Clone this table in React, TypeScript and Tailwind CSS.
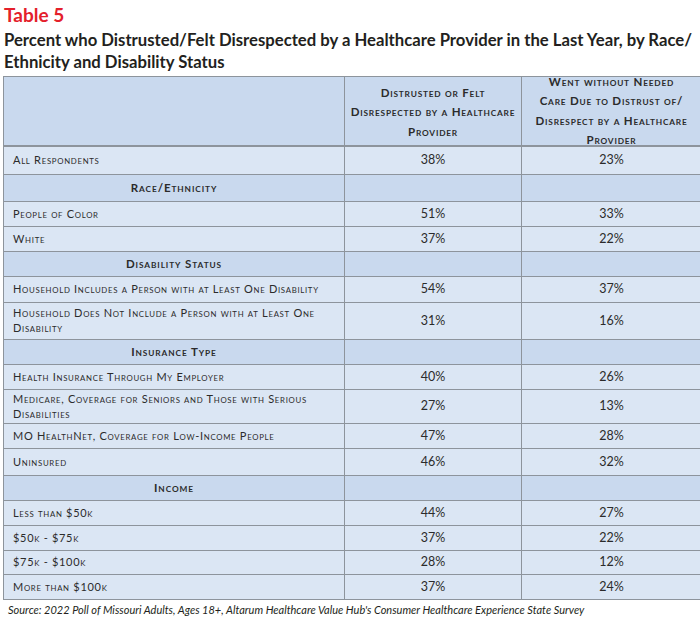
import React from "react";

type Row =
  | { kind: "data"; label: string; a: string; b: string; h: number }
  | { kind: "section"; label: string; h: number };

const rows: Row[] = [
  { kind: "data", label: "All Respondents", a: "38%", b: "23%", h: 28 },
  { kind: "section", label: "Race/Ethnicity", h: 27 },
  { kind: "data", label: "People of Color", a: "51%", b: "33%", h: 25 },
  { kind: "data", label: "White", a: "37%", b: "22%", h: 25 },
  { kind: "section", label: "Disability Status", h: 25 },
  { kind: "data", label: "Household Includes a Person with at Least One Disability", a: "54%", b: "37%", h: 26 },
  { kind: "data", label: "Household Does Not Include a Person with at Least One Disability", a: "31%", b: "16%", h: 37 },
  { kind: "section", label: "Insurance Type", h: 25 },
  { kind: "data", label: "Health Insurance Through My Employer", a: "40%", b: "26%", h: 25 },
  { kind: "data", label: "Medicare, Coverage for Seniors and Those with Serious Disabilities", a: "27%", b: "13%", h: 34 },
  { kind: "data", label: "MO HealthNet, Coverage for Low-Income People", a: "47%", b: "28%", h: 25 },
  { kind: "data", label: "Uninsured", a: "46%", b: "32%", h: 27 },
  { kind: "section", label: "Income", h: 25 },
  { kind: "data", label: "Less than $50k", a: "44%", b: "27%", h: 25 },
  { kind: "data", label: "$50k - $75k", a: "37%", b: "22%", h: 25 },
  { kind: "data", label: "$75k - $100k", a: "28%", b: "12%", h: 24 },
  { kind: "data", label: "More than $100k", a: "37%", b: "24%", h: 25 },
];

function SC({ text, small }: { text: string; small: string }) {
  const parts = text.split(/([a-z]+)/);
  return (
    <>
      {parts.map((p, i) =>
        /^[a-z]+$/.test(p) ? (
          <span key={i} className={small}>
            {p.toUpperCase()}
          </span>
        ) : (
          <React.Fragment key={i}>{p}</React.Fragment>
        )
      )}
    </>
  );
}

const HS = "text-[8.3px]";
const RS = "text-[7.8px]";

export default function App() {
  return (
    <div className="w-[700px] h-[618px] bg-white overflow-hidden text-[#2b2b2b] font-['Lato','Open_Sans',sans-serif]">
      <div className="pl-[4px] pt-[4px]">
        <div className="text-[19px] leading-[22px] font-bold text-[#e4202b]">Table 5</div>
        <h1 className="mt-[3px] text-[16.7px] leading-[22px] font-bold text-[#231f20] whitespace-nowrap">
          Percent who Distrusted/Felt Disrespected by a Healthcare Provider in the Last Year, by Race/
          <br />
          Ethnicity and Disability Status
        </h1>
      </div>
      <div className="mt-[3px] ml-[3px] w-[700px] border-l border-t border-[#8d949c]">
        <div className="flex h-[70px] bg-[#c9d9ee] border-b-2 border-[#8d949c]">
          <div className="w-[341px] border-r border-[#8d949c]" />
          <div className="w-[177px] border-r border-[#8d949c] flex items-center justify-center text-center font-bold text-[11.5px] leading-[18.5px] tracking-[0.8px] pt-[4px] whitespace-nowrap">
            <div>
              <SC text="Distrusted or Felt" small={HS} />
              <br />
              <SC text="Disrespected by a Healthcare" small={HS} />
              <br />
              <SC text="Provider" small={HS} />
            </div>
          </div>
          <div className="w-[179px] flex items-center justify-center text-center font-bold text-[11.5px] leading-[18.3px] tracking-[0.8px] pt-[1px] whitespace-nowrap">
            <div>
              <SC text="Went without Needed" small={HS} />
              <br />
              <SC text="Care Due to Distrust of/" small={HS} />
              <br />
              <SC text="Disrespect by a Healthcare" small={HS} />
              <br />
              <SC text="Provider" small={HS} />
            </div>
          </div>
        </div>
        {rows.map((r, i) => (
          <div
            key={i}
            className={
              "flex border-b border-[#8d949c] " +
              (r.kind === "section" ? "bg-[#c9d9ee]" : "bg-[#dbe6f4]")
            }
            style={{ height: r.h }}
          >
            {r.kind === "section" ? (
              <div className="w-[341px] border-r border-[#8d949c] flex items-center justify-center font-bold text-[11.5px] tracking-[0.9px]">
                <span>
                  <SC text={r.label} small={HS} />
                </span>
              </div>
            ) : (
              <div className="w-[341px] border-r border-[#8d949c] flex items-center pl-[9px] pr-[12px] text-[11px] leading-[13px] tracking-[0.7px]">
                <span>
                  <SC text={r.label} small={RS} />
                </span>
              </div>
            )}
            <div className="w-[177px] border-r border-[#8d949c] flex items-center justify-center text-[12.5px]">
              {r.kind === "data" ? r.a : ""}
            </div>
            <div className="w-[179px] flex items-center justify-center text-[12.5px]">
              {r.kind === "data" ? r.b : ""}
            </div>
          </div>
        ))}
      </div>
      <div className="pl-[8px] mt-[2px] text-[11px] italic text-[#231f20] whitespace-nowrap">
        Source: 2022 Poll of Missouri Adults, Ages 18+, Altarum Healthcare Value Hub's Consumer Healthcare Experience State Survey
      </div>
    </div>
  );
}
